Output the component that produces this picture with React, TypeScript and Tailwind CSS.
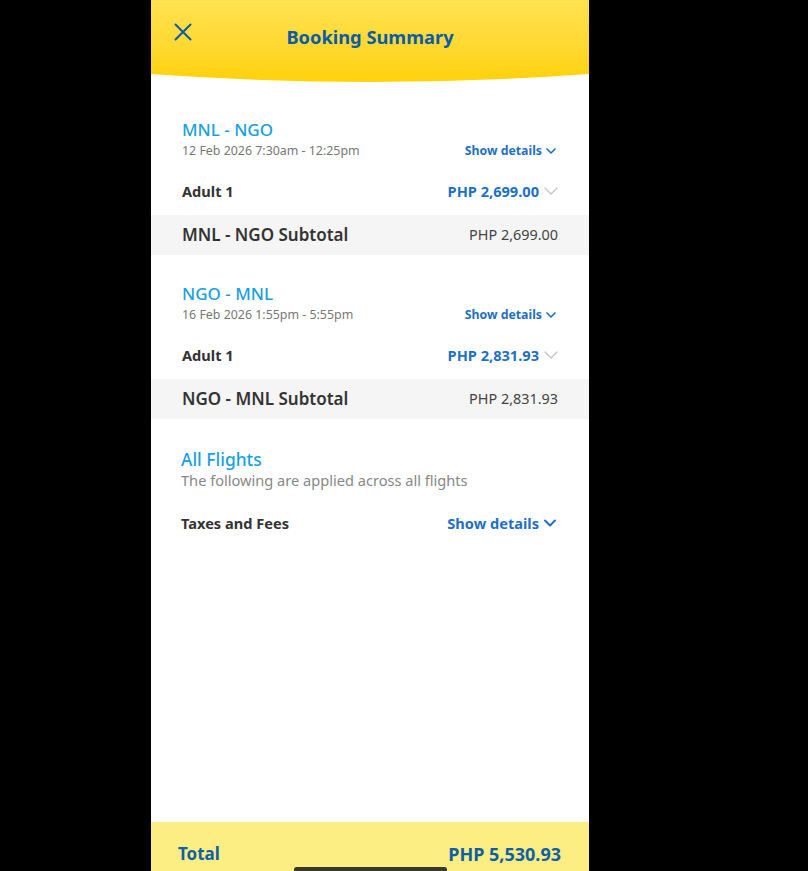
import {ChevronDown} from "lucide-react";

type Leg = {
  route: string
  date: string
  price: string
}

const legs: Leg[] = [
  {route: 'MNL - NGO', date: '12 Feb 2026 7:30am - 12:25pm', price: 'PHP 2,699.00'},
  {route: 'NGO - MNL', date: '16 Feb 2026 1:55pm - 5:55pm', price: 'PHP 2,831.93'},
]

function CloseIcon() {
  return (
    <svg width="18" height="18" viewBox="0 0 18 18" fill="none" stroke="#0b5aa5" strokeWidth="2" strokeLinecap="round">
      <path d="M1.5 1.5 16.5 16.5M16.5 1.5 1.5 16.5"/>
    </svg>
  )
}

function LegSection({leg, first}: { leg: Leg, first: boolean }) {
  return (
    <section className={first ? 'pt-[37px]' : 'pt-[28px]'}>
      <div className="flex items-end justify-between px-[31px]">
        <div>
          <h2 className="text-[17px] leading-[22px] font-medium text-[#1aa0e0]">{leg.route}</h2>
          <p className="mt-[1px] text-[12.4px] leading-[18px] text-[#777]">{leg.date}</p>
        </div>
        <button className="flex items-center gap-[1px] text-[12.3px] leading-[18px] font-bold text-[#1f70c2] -mr-[1px]">
          Show details
          <ChevronDown size={16} strokeWidth={2.5}/>
        </button>
      </div>

      <div className="flex items-center justify-between px-[31px] pt-[21px] pb-[14px]">
        <span className="text-[14.6px] leading-5 font-bold text-[#333]">Adult 1</span>
        <span className="flex h-5 items-center">
          <span className="text-[14.6px] leading-5 font-bold text-[#1f70c2]">{leg.price}</span>
          <ChevronDown size={24} strokeWidth={1.3} className="text-[#c4c4c4] -my-[2px] -mr-[5px]"/>
        </span>
      </div>

      <div className="flex h-10 items-center justify-between bg-[#f5f5f5] px-[31px]">
        <span className="text-[17px] font-semibold text-[#333]">{leg.route} Subtotal</span>
        <span className="text-[14.4px] text-[#444]">{leg.price}</span>
      </div>
    </section>
  )
}

export default function App() {
  return (
    <div className="flex h-screen bg-black pl-[151px]" style={{fontFamily: '"Noto Sans", "Open Sans", sans-serif'}}>
      <div className="flex h-screen w-[438px] flex-col overflow-hidden bg-white">
        <header className="shrink-0">
          <div className="relative flex h-[74px] items-center justify-center bg-gradient-to-b from-[#ffe24f] to-[#ffd310]">
            <button className="absolute left-[23px] top-[23px]" aria-label="Close">
              <CloseIcon/>
            </button>
            <h1 className="text-[18.3px] font-bold text-[#0b5aa5]">Booking Summary</h1>
          </div>
          <svg className="block" width="438" height="8" viewBox="0 0 438 8" preserveAspectRatio="none">
            <path d="M0 0 H438 Q219 16 0 0 Z" fill="#ffd310"/>
          </svg>
        </header>

        <main className="flex-1">
          {legs.map((leg, i) => (
            <LegSection key={leg.route} leg={leg} first={i === 0}/>
          ))}

          <section className="pt-[29px] px-[30px]">
            <h2 className="text-[17.4px] leading-[22px] font-medium text-[#1aa0e0]">All Flights</h2>
            <p className="text-[14.6px] leading-5 text-[#888]">The following are applied across all flights</p>
            <div className="flex items-center justify-between pt-[23px]">
              <span className="text-[14.6px] leading-5 font-bold text-[#333]">Taxes and Fees</span>
              <button className="flex h-5 items-center gap-[1px] text-[14.6px] leading-5 font-bold text-[#1f70c2] -mr-[1px]">
                Show details
                <ChevronDown size={20} strokeWidth={2.4}/>
              </button>
            </div>
          </section>
        </main>

        <footer className="h-[49px] shrink-0 overflow-hidden bg-[#fdee84] pt-[20px]">
          <div className="flex items-center justify-between pl-[27px] pr-[28px]">
            <span className="text-[17px] leading-6 font-bold text-[#0f5fa6]">Total</span>
            <span className="text-[18px] leading-6 font-bold text-[#0f5fa6]">PHP 5,530.93</span>
          </div>
          <div className="mx-auto mt-[1px] h-[5px] w-[153px] rounded-full bg-[#3a3a2a]"/>
        </footer>
      </div>
    </div>
  )
}
